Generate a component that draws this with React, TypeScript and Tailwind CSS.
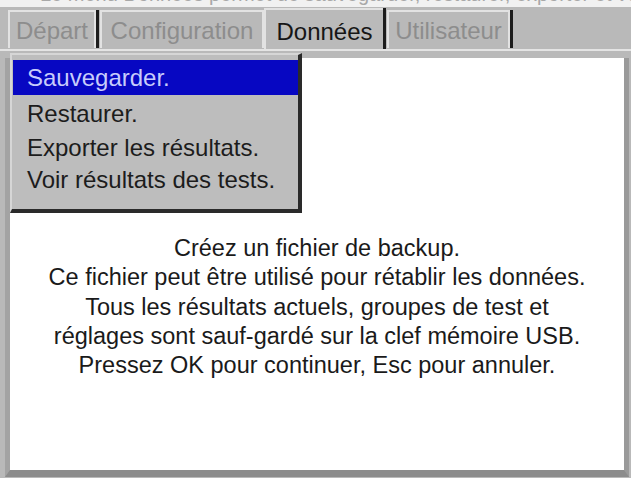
import React from "react";

const font = { fontFamily: '"Liberation Sans", Arial, sans-serif' };

function InactiveTab({ label, width, dark = true }: { label: string; width: string; dark?: boolean }) {
  return (
    <div className={dark ? "flex h-[38px] mb-[1px] border-r-[3px] border-[#1c1c1c]" : "flex h-[38px] mb-[1px]"}>
      <div
        className={`${width} h-full flex items-center justify-center border-t-2 border-l-2 border-r-2 border-[#e2e2e2] bg-[#b9b9b9] text-[#8d8d8d] text-[24px] leading-none pt-[2px]`}
      >
        {label}
      </div>
    </div>
  );
}

export default function App() {
  const items = [
    { t: "Sauvegarder.", h: "h-[35px]", sel: true },
    { t: "Restaurer.", h: "h-[37px]", sel: false },
    { t: "Exporter les résultats.", h: "h-[32px]", sel: false },
    { t: "Voir résultats des tests.", h: "h-[31px]", sel: false },
  ];
  const lines = [
    "Créez un fichier de backup.",
    "Ce fichier peut être utilisé pour rétablir les données.",
    "Tous les résultats actuels, groupes de test et",
    "réglages sont sauf-gardé sur la clef mémoire USB.",
    "Pressez OK pour continuer, Esc pour annuler.",
  ];
  return (
    <div className="w-[631px] h-[478px] flex flex-col bg-[#b9b9b9] overflow-hidden" style={font}>
      {/* cut-off caption strip */}
      <div className="h-[7px] bg-[#f1f1f1] overflow-hidden shrink-0">
        <div className="-mt-[16px] pl-[40px] text-[20px] leading-[20px] text-[#a8a8a8] whitespace-nowrap">
          Le menu Données permet de sauvegarder, restaurer, exporter et voir les résultats.
        </div>
      </div>

      {/* tab row */}
      <div className="h-[42px] flex items-end pl-[8px] shrink-0">
        <InactiveTab label="Départ" width="w-[88px]" />
        <div className="ml-[1px]">
          <InactiveTab label="Configuration" width="w-[164px]" dark={false} />
        </div>
        <div className="flex h-[41px] border-r-[3px] border-[#1c1c1c]">
          <div className="w-[119px] h-full flex items-start justify-center pt-[10px] border-t-2 border-l-2 border-[#e2e2e2] bg-[#bababa] text-[#161616] text-[24px] leading-none">
            Données
          </div>
        </div>
        <div className="ml-[1px] flex h-[38px] mb-[1px] border-r-[3px] border-[#1c1c1c]">
          <div className="w-[123px] h-full flex items-center justify-center border-t-2 border-l-2 border-r-2 border-[#e2e2e2] bg-[#b9b9b9] text-[#8d8d8d] text-[24px] leading-none pt-[2px]">
            Utilisateur
          </div>
        </div>
      </div>

      {/* panel */}
      <div className="flex-1 flex flex-col border-t-2 border-[#e4e4e4] pt-[7px] pl-[5px] pr-[2px] pb-[1px] bg-[#b9b9b9]">
        <div className="relative flex-1 bg-white border-l-[5px] border-[#a3a3a3] border-r-[5px] border-r-[#9a9a9a] border-b-[7px] border-b-[#8c8c8c]">
          {/* text */}
          <div className="pt-[176px] text-center text-[23.5px] leading-[29.3px] text-[#1a1a1a]">
            {lines.map((l) => (
              <div key={l}>{l}</div>
            ))}
          </div>

          {/* dropdown menu */}
          <div className="absolute left-0 top-[-5px] w-[292px] h-[160px] bg-[#bdbdbd] border-t-[2px] border-l-[2px] border-[#d6d6d6] border-r-[4px] border-r-[#2a2a2a] border-b-[4px] border-b-[#2a2a2a] pt-[5px] pl-[1px]">
            {items.map((it) => (
              <div
                key={it.t}
                className={`${it.h} flex items-center pl-[14px] text-[24px] leading-none ${
                  it.sel ? "bg-[#0707c2] text-[#c7ccfb]" : "text-[#1c1c1c]"
                }`}
              >
                {it.t}
              </div>
            ))}
          </div>
        </div>
      </div>
    </div>
  );
}
